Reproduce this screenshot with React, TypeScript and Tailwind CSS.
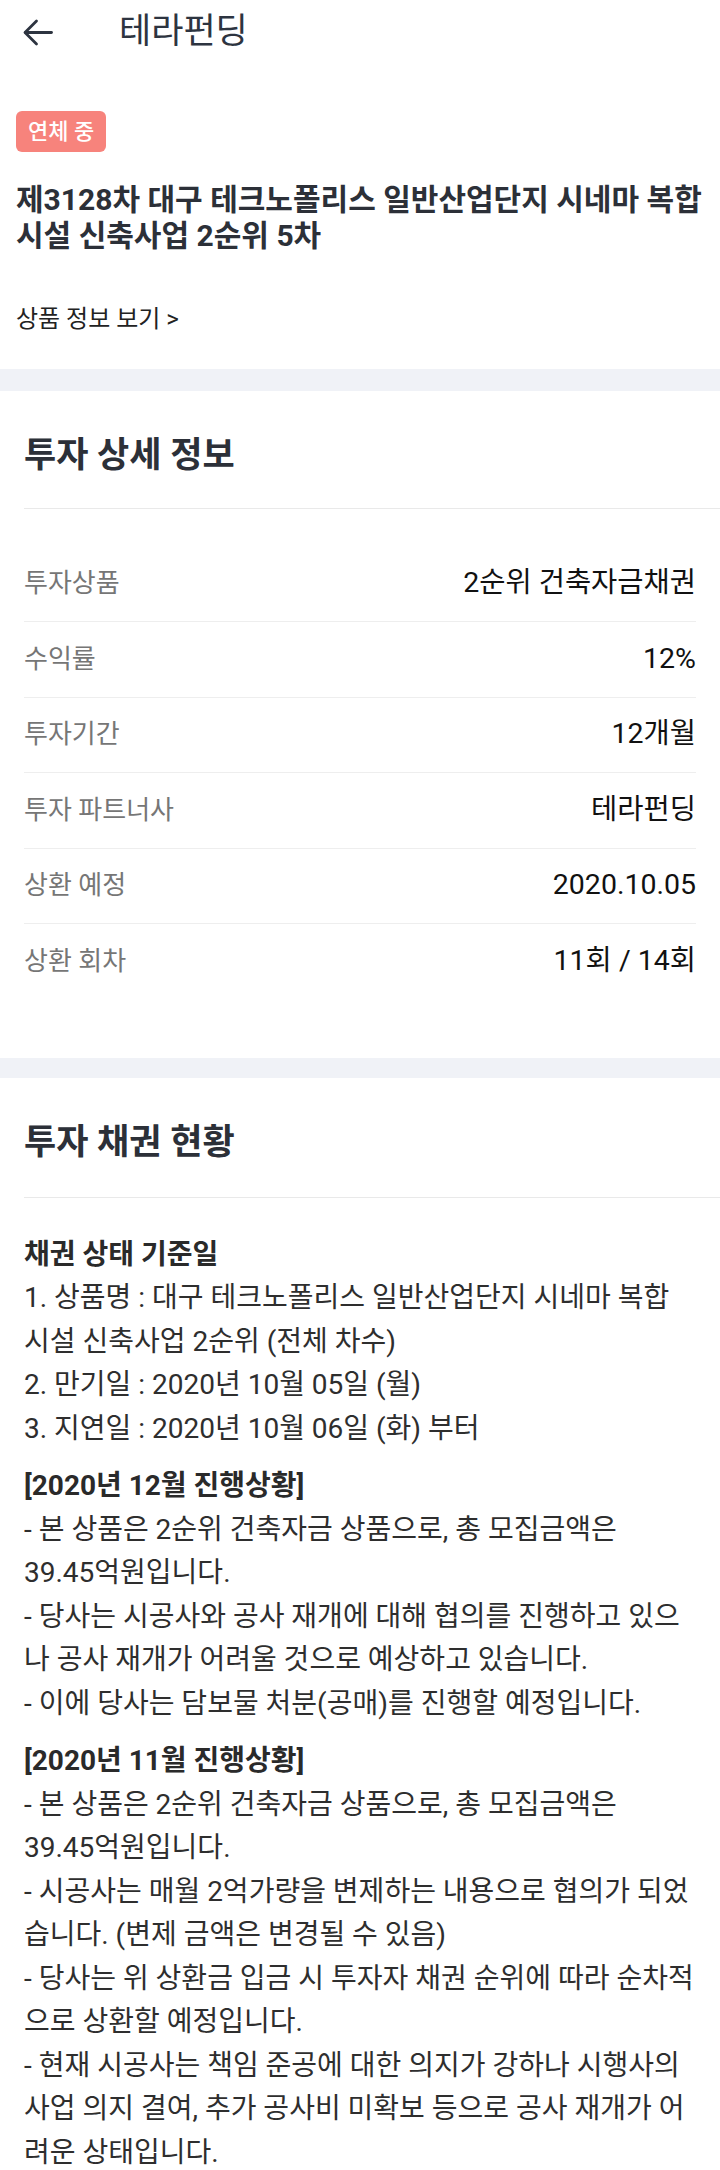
import React from "react";

const rows: [string, string][] = [
  ["투자상품", "2순위 건축자금채권"],
  ["수익률", "12%"],
  ["투자기간", "12개월"],
  ["투자 파트너사", "테라펀딩"],
  ["상환 예정", "2020.10.05"],
  ["상환 회차", "11회 / 14회"],
];

const paragraphs: { head: string; lines: string[] }[] = [
  {
    head: "채권 상태 기준일",
    lines: [
      "1. 상품명 : 대구 테크노폴리스 일반산업단지 시네마 복합",
      "시설 신축사업 2순위 (전체 차수)",
      "2. 만기일 : 2020년 10월 05일 (월)",
      "3. 지연일 : 2020년 10월 06일 (화) 부터",
    ],
  },
  {
    head: "[2020년 12월 진행상황]",
    lines: [
      "- 본 상품은 2순위 건축자금 상품으로, 총 모집금액은",
      "39.45억원입니다.",
      "- 당사는 시공사와 공사 재개에 대해 협의를 진행하고 있으",
      "나 공사 재개가 어려울 것으로 예상하고 있습니다.",
      "- 이에 당사는 담보물 처분(공매)를 진행할 예정입니다.",
    ],
  },
  {
    head: "[2020년 11월 진행상황]",
    lines: [
      "- 본 상품은 2순위 건축자금 상품으로, 총 모집금액은",
      "39.45억원입니다.",
      "- 시공사는 매월 2억가량을 변제하는 내용으로 협의가 되었",
      "습니다. (변제 금액은 변경될 수 있음)",
      "- 당사는 위 상환금 입금 시 투자자 채권 순위에 따라 순차적",
      "으로 상환할 예정입니다.",
      "- 현재 시공사는 책임 준공에 대한 의지가 강하나 시행사의",
      "사업 의지 결여, 추가 공사비 미확보 등으로 공사 재개가 어",
      "려운 상태입니다.",
    ],
  },
];

export default function App() {
  return (
    <div className="w-[720px] overflow-hidden bg-white font-[Roboto,'Noto_Sans_CJK_KR',sans-serif]">
      {/* Top bar */}
      <header className="flex h-16 items-center pl-[23px]">
        <svg width="30" height="27" viewBox="0 0 30 27" fill="none" className="shrink-0">
          <path d="M28.5 13.5H2.5" stroke="#2d3440" strokeWidth="2.8" strokeLinecap="round" />
          <path d="M13.5 2L2 13.5L13.5 25" stroke="#2d3440" strokeWidth="2.8" strokeLinecap="round" strokeLinejoin="round" />
        </svg>
        <span className="ml-[66px] text-[35px] leading-[40px] text-[#2d3440]">테라펀딩</span>
      </header>

      {/* Product summary */}
      <section className="px-4 pt-[47px] pb-[36px]">
        <span className="inline-block h-[41px] rounded-[6px] bg-[#f7837c] px-3 text-[22px] leading-[41px] font-medium text-white">
          연체 중
        </span>
        <h1 className="mt-[30px] whitespace-nowrap text-[30px] leading-[36px] font-bold text-[#2c3038]">
          제3128차 대구 테크노폴리스 일반산업단지 시네마 복합
          <br />
          시설 신축사업 2순위 5차
        </h1>
        <div className="mt-[51px] text-[24px] leading-[28px] text-[#222]">상품 정보 보기 &gt;</div>
      </section>

      <div className="h-[22px] bg-[#f0f2f7]" />

      {/* Investment detail */}
      <section className="pl-6 pb-[59px]">
        <h2 className="border-b border-[#e9e9e9] pt-[45px] pb-[32px] text-[35px] leading-[40px] font-bold text-[#2c3038]">
          투자 상세 정보
        </h2>
        <div className="pt-[37.5px] pr-6">
          {rows.map(([label, value], i) => (
            <div
              key={label}
              className={
                i < rows.length - 1
                  ? "flex h-[75.5px] items-center justify-between border-b border-[#eeeeee]"
                  : "flex h-[74.5px] items-center justify-between"
              }
            >
              <span className="text-[26px] text-[#767676]">{label}</span>
              <span className="text-[28.5px] font-normal text-[#111111]">{value}</span>
            </div>
          ))}
        </div>
      </section>

      <div className="h-[20px] bg-[#f0f2f7]" />

      {/* Bond status */}
      <section className="pl-6">
        <h2 className="border-b border-[#e9e9e9] pt-[45px] pb-[34px] text-[35px] leading-[40px] font-bold text-[#2c3038]">
          투자 채권 현황
        </h2>
        <div className="pt-[35px] pr-6 text-[28px] leading-[43.5px] text-[#2e2e2e]">
          {paragraphs.map((p, i) => (
            <div key={i} className={i === 0 ? "" : "mt-[14px]"}>
              <div className="whitespace-nowrap font-bold text-[#2a2a2a]">{p.head}</div>
              {p.lines.map((l, j) => (
                <div key={j} className="whitespace-nowrap">
                  {l}
                </div>
              ))}
            </div>
          ))}
        </div>
      </section>
    </div>
  );
}
